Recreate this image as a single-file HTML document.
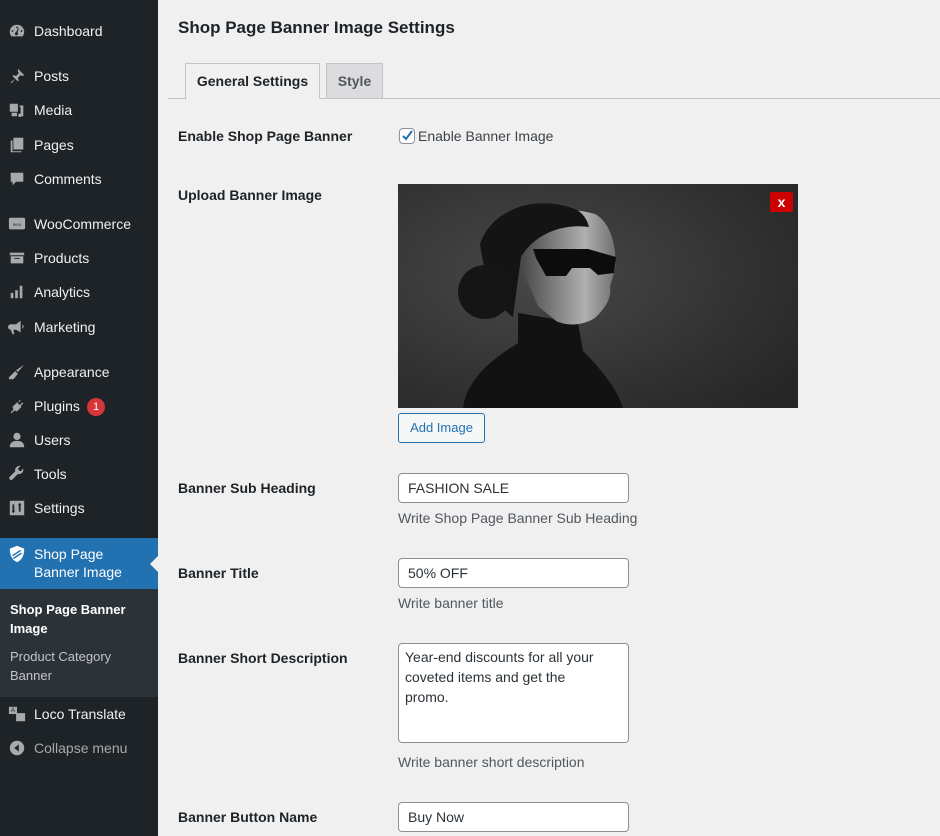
<!DOCTYPE html>
<html><head><meta charset="utf-8"><style>
*{margin:0;padding:0;box-sizing:border-box}
body{width:940px;height:836px;overflow:hidden;background:#f0f0f1;font-family:"Liberation Sans",sans-serif;color:#1d2327;position:relative}
#sb{position:absolute;left:0;top:0;width:158px;height:836px;background:#1d2327}
.mi{position:absolute;left:34px;font-size:14px;color:#f0f0f1;line-height:18px}
.ic{position:absolute;left:8px;width:18px;height:18px;fill:#a7aaad}
.abs{position:absolute}
.lbl{position:absolute;left:178px;font-size:14px;font-weight:bold;color:#1d2327}
.inp{position:absolute;left:398px;width:231px;height:30px;background:#fff;border:1px solid #8c8f94;border-radius:4px;font-size:14px;padding:6px 9px;color:#2c3338}
.desc{position:absolute;left:398px;font-size:14px;color:#50575e}
</style></head><body>
<div id="sb">
<svg class="ic" style="top:22px" viewBox="0 0 20 20"><path d="M10 3a8 8 0 0 0-8 8c0 2 .7 3.6 1.8 5h12.4A8 8 0 0 0 10 3zm0 2a1 1 0 1 1 0 2 1 1 0 0 1 0-2zM5 9a1 1 0 1 1 0 2 1 1 0 0 1 0-2zm10 0a1 1 0 1 1 0 2 1 1 0 0 1 0-2zm-3-2.5l-1.3 5.2A1.8 1.8 0 1 1 9 11.2l2.5-4.9z"/></svg>
<div class="mi" style="top:22px">Dashboard</div>
<svg class="ic" style="top:67px" viewBox="0 0 20 20"><path d="M11 2l7 7-2 1-2-1-3 3 1 3-1 1-3-3-4 5-1-1 5-4-3-3 1-1 3 1 3-3-1-2z"/></svg>
<div class="mi" style="top:67px">Posts</div>
<svg class="ic" style="top:101px" viewBox="0 0 20 20"><path d="M2 3h9v9H2zm11 2h4v12h-2a2 2 0 1 1-1-3V7h-1zM4 13h6v4H4z"/></svg>
<div class="mi" style="top:101px">Media</div>
<svg class="ic" style="top:136px" viewBox="0 0 20 20"><path d="M6 2h11v13H6zM3 5h2v12h10v1H3z"/></svg>
<div class="mi" style="top:136px">Pages</div>
<svg class="ic" style="top:170px" viewBox="0 0 20 20"><path d="M3 3h14v10H9l-4 4v-4H3z"/></svg>
<div class="mi" style="top:170px">Comments</div>
<svg class="ic" style="top:215px" viewBox="0 0 20 20"><rect x="1" y="3" width="18" height="13" rx="2"/><text x="10" y="12" font-size="5" text-anchor="middle" fill="#1d2327" font-family="Liberation Sans">woo</text></svg>
<div class="mi" style="top:215px">WooCommerce</div>
<svg class="ic" style="top:249px" viewBox="0 0 20 20"><path d="M2 4h16v3H2zm1 4h14v8H3zm4 2v1h6v-1z"/></svg>
<div class="mi" style="top:249px">Products</div>
<svg class="ic" style="top:283px" viewBox="0 0 20 20"><path d="M3 11h3v6H3zm5-3h3v9H8zm5-5h3v14h-3z"/></svg>
<div class="mi" style="top:283px">Analytics</div>
<svg class="ic" style="top:318px" viewBox="0 0 20 20"><path d="M14 3v13l-5-3H6l1 5H5l-2-5a3 3 0 0 1 0-6h6zm2 4a3 3 0 0 1 0 5z"/></svg>
<div class="mi" style="top:318px">Marketing</div>
<svg class="ic" style="top:363px" viewBox="0 0 20 20"><path d="M18 2l-7 8-2-2zM8 9l3 3-5 6-5 0 0-2z"/></svg>
<div class="mi" style="top:363px">Appearance</div>
<svg class="ic" style="top:397px" viewBox="0 0 20 20"><path d="M13 3l1 1-3 3 2 2 3-3 1 1-3 3 1 1-5 5-3-1-3 3-1-1 3-3-1-3 5-5 1 1z"/></svg>
<div class="mi" style="top:397px">Plugins</div>
<div class="abs" style="left:87px;top:398px;width:18px;height:18px;border-radius:9px;background:#d63638;color:#fff;font-size:11px;text-align:center;line-height:18px">1</div>
<svg class="ic" style="top:431px" viewBox="0 0 20 20"><circle cx="10" cy="6" r="4"/><path d="M2 18c0-5 3-7 8-7s8 2 8 7z"/></svg>
<div class="mi" style="top:431px">Users</div>
<svg class="ic" style="top:465px" viewBox="0 0 20 20"><path d="M17 4l-3 3-2-1-1-2 3-3a5 5 0 0 0-6 6L2 13a2 2 0 0 0 3 3l6-6a5 5 0 0 0 6-6z"/></svg>
<div class="mi" style="top:465px">Tools</div>
<svg class="ic" style="top:499px" viewBox="0 0 20 20"><path d="M2 2h16v16H2zm3 4v7H4l2 3 2-3H7V6zm7 8h2V7h1l-2-3-2 3h1z"/></svg>
<div class="mi" style="top:499px">Settings</div>
<div class="abs" style="left:0;top:538px;width:158px;height:51px;background:#2271b1"></div>
<svg class="ic" style="top:545px;fill:#fff" viewBox="0 0 20 20"><path d="M10 1l8 3c0 8-3 13-8 15C5 17 2 12 2 4z"/><path d="M5 12l9-6M6 15l9-6" stroke="#2271b1" stroke-width="1.6"/></svg>
<div class="mi" style="top:545px;color:#fff">Shop Page<br>Banner Image</div>
<div class="abs" style="left:150px;top:556px;width:0;height:0;border-top:8px solid transparent;border-bottom:8px solid transparent;border-right:8px solid #f0f0f1"></div>
<div class="abs" style="left:0;top:589px;width:158px;height:108px;background:#2c3338"></div>
<div class="abs" style="left:10px;top:601px;font-size:13px;line-height:18.5px;font-weight:bold;color:#fff">Shop Page Banner<br>Image</div>
<div class="abs" style="left:10px;top:647px;font-size:13px;line-height:19px;color:#c3c4c7">Product Category<br>Banner</div>
<svg class="ic" style="top:705px" viewBox="0 0 20 20"><path d="M1 2h9v8H1z"/><path d="M9 9h10v9H9z"/><text x="5.5" y="8" font-size="7" text-anchor="middle" fill="#1d2327">A</text></svg>
<div class="mi" style="top:705px">Loco Translate</div>
<svg class="ic" style="top:739px" viewBox="0 0 20 20"><circle cx="10" cy="10" r="8"/><path d="M12 6v8l-5-4z" fill="#1d2327"/></svg>
<div class="mi" style="top:739px;color:#a7aaad">Collapse menu</div>
</div>

<div class="abs" style="left:178px;top:18px;font-size:17px;font-weight:bold;color:#1d2327">Shop Page Banner Image Settings</div>
<div class="abs" style="left:168px;top:98px;width:772px;height:1px;background:#c3c4c7"></div>
<div class="abs" style="left:185px;top:63px;width:135px;height:36px;background:#f0f0f1;border:1px solid #c3c4c7;border-bottom:none;font-size:14px;font-weight:bold;text-align:center;line-height:35px">General Settings</div>
<div class="abs" style="left:326px;top:63px;width:57px;height:35px;background:#dcdcde;border:1px solid #c3c4c7;border-bottom:none;font-size:14px;font-weight:bold;color:#50575e;text-align:center;line-height:34px">Style</div>

<div class="lbl" style="top:128px">Enable Shop Page Banner</div>
<div class="abs" style="left:399px;top:128px;width:16px;height:16px;border:1px solid #8c8f94;border-radius:4px;background:#fff"></div>
<svg class="abs" style="left:399px;top:127px" width="17" height="17" viewBox="0 0 17 17"><path d="M4 9l3 3 6-8" stroke="#2271b1" stroke-width="2" fill="none"/></svg>
<div class="abs" style="left:418px;top:128px;font-size:14px;color:#3c434a">Enable Banner Image</div>

<div class="lbl" style="top:187px">Upload Banner Image</div>
<svg class="abs" style="left:398px;top:184px" width="400" height="224" viewBox="0 0 400 224">
<defs><radialGradient id="bg" cx="0.35" cy="0.4" r="0.8"><stop offset="0" stop-color="#484848"/><stop offset="1" stop-color="#262626"/></radialGradient>
<linearGradient id="face" x1="0" x2="1"><stop offset="0" stop-color="#3a3a3a"/><stop offset="0.7" stop-color="#b0b0b0"/><stop offset="1" stop-color="#707070"/></linearGradient></defs>
<rect width="400" height="224" fill="url(#bg)"/>
<path d="M65 224c5-35 40-55 55-65l0-30 60 10 5 28c20 20 35 40 40 57z" fill="#121212"/>
<path d="M115 65c12-35 50-45 82-35 18 10 22 38 20 55l-5 18c2 12-6 22-14 30-10 8-28 10-40 4l-18-15z" fill="url(#face)"/>
<path d="M82 60c12-35 55-50 95-35 8 4 12 10 14 18-28-4-55 8-68 30l-8 60c-15-10-28-35-33-73z" fill="#141414"/>
<circle cx="87" cy="108" r="27" fill="#151515"/>
<path d="M135 65l55 0 28 8-2 16-16 2-8-7-18 0-6 8-20 0-10-18z" fill="#0c0c0c"/>
<rect x="372" y="8" width="23" height="20" rx="2" fill="#cc0000"/>
<text x="383.5" y="23" font-size="14" font-weight="bold" fill="#fff" text-anchor="middle" font-family="Liberation Sans">x</text>
</svg>
<div class="abs" style="left:398px;top:413px;width:87px;height:30px;border:1px solid #2271b1;border-radius:3px;background:#f6f7f7;color:#2271b1;font-size:13px;text-align:center;line-height:28px">Add Image</div>

<div class="lbl" style="top:480px">Banner Sub Heading</div>
<div class="inp" style="top:473px">FASHION SALE</div>
<div class="desc" style="top:510px">Write Shop Page Banner Sub Heading</div>

<div class="lbl" style="top:565px">Banner Title</div>
<div class="inp" style="top:558px">50% OFF</div>
<div class="desc" style="top:595px">Write banner title</div>

<div class="lbl" style="top:650px">Banner Short Description</div>
<div class="inp" style="top:643px;height:100px;line-height:20px;padding:3px 6px;white-space:nowrap">Year-end discounts for all your<br>coveted items and get the<br>promo.</div>
<div class="desc" style="top:754px">Write banner short description</div>

<div class="lbl" style="top:809px">Banner Button Name</div>
<div class="inp" style="top:802px">Buy Now</div>
</body></html>
